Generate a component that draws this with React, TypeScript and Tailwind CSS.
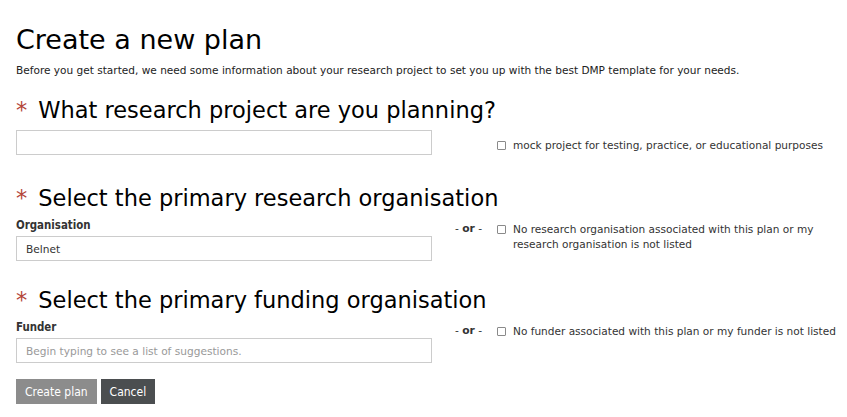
import React from "react";

function Heading({ children, className = "" }: { children: React.ReactNode; className?: string }) {
  return (
    <h2 className={`flex items-start font-['DejaVu_Sans',Verdana,sans-serif] text-[22.5px] leading-[28px] text-black ${className}`}>
      <span className="text-[#b4473a]">*</span>
      <span className="ml-[11px]">{children}</span>
    </h2>
  );
}

function Check({ children }: { children: React.ReactNode }) {
  return (
    <label className="flex items-start text-[10.55px] leading-[14.5px] text-[#333]">
      <span className="mt-[3px] h-[9px] w-[9px] shrink-0 rounded-[1px] border border-[#8a8a8a] bg-white" />
      <span className="ml-[7px] w-[328px]">{children}</span>
    </label>
  );
}

function Or() {
  return (
    <span className="w-[42px] shrink-0 text-[10.7px] leading-[14.5px] text-[#333]">
      - <b className="font-bold">or</b> -
    </span>
  );
}

export default function App() {
  return (
    <div className="min-h-screen bg-white px-4 pt-[25px] text-[#333] font-['DejaVu_Sans',Verdana,sans-serif]">
      <h1 className="text-[27px] leading-[30px] text-black">Create a new plan</h1>
      <p className="mt-[8px] text-[10.55px] leading-[14px] text-[#222]">
        Before you get started, we need some information about your research project to set you up with the best DMP template for your needs.
      </p>

      <Heading className="mt-[19px]">What research project are you planning?</Heading>
      <div className="mt-[6px] flex">
        <input className="h-[25px] w-[416px] shrink-0 border border-[#ccc] px-[9px] text-[10.6px] outline-none" />
        <div className="ml-[23px] flex pt-[8px]">
          <span className="w-[42px] shrink-0" />
          <Check>mock project for testing, practice, or educational purposes</Check>
        </div>
      </div>

      <Heading className="mt-[29px]">Select the primary research organisation</Heading>
      <div className="mt-[6px] flex">
        <div className="w-[416px] shrink-0">
          <div className="font-['DejaVu_Sans_Condensed','DejaVu_Sans',sans-serif] text-[11.4px] font-bold leading-[14px] text-[#333]">Organisation</div>
          <input
            defaultValue="Belnet"
            className="mt-[4px] h-[25px] w-full border border-[#ccc] px-[9px] text-[10.6px] text-[#333] outline-none"
          />
        </div>
        <div className="ml-[23px] flex pt-[4px]">
          <Or />
          <Check>No research organisation associated with this plan or my research organisation is not listed</Check>
        </div>
      </div>

      <Heading className="mt-[25px]">Select the primary funding organisation</Heading>
      <div className="mt-[6px] flex">
        <div className="w-[416px] shrink-0">
          <div className="font-['DejaVu_Sans_Condensed','DejaVu_Sans',sans-serif] text-[11.4px] font-bold leading-[14px] text-[#333]">Funder</div>
          <input
            placeholder="Begin typing to see a list of suggestions."
            className="mt-[4px] h-[25px] w-full border border-[#ccc] px-[9px] text-[10.6px] text-[#333] outline-none placeholder:text-[#999]"
          />
        </div>
        <div className="ml-[23px] flex pt-[4px]">
          <Or />
          <Check>No funder associated with this plan or my funder is not listed</Check>
        </div>
      </div>

      <div className="mt-[16px] flex gap-[4px] font-['DejaVu_Sans_Condensed','DejaVu_Sans',sans-serif]">
        <button className="h-[25px] bg-[#8c8c8c] px-[9px] text-[12px] text-white">Create plan</button>
        <button className="h-[25px] bg-[#4b4e50] px-[9px] text-[12px] text-white">Cancel</button>
      </div>
    </div>
  );
}
